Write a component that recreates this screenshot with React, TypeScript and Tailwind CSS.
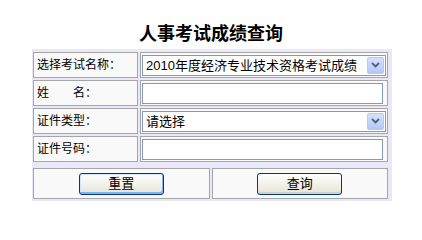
import React from 'react'

const cell = 'border border-[#a6a6a6] bg-[#f9f9f9]'

function ArrowButton() {
  return (
    <div className="ml-auto mr-px flex h-[17px] w-[17px] items-center justify-center rounded-[2px] border border-[#b6c8f4] bg-gradient-to-b from-[#d6e2fc] to-[#b3c8f5]">
      <svg viewBox="0 0 9 6" className="h-[6px] w-[9px]">
        <path d="M1 1 L4.5 4.5 L8 1" fill="none" stroke="#4d6185" strokeWidth="1.8" />
      </svg>
    </div>
  )
}

function FakeSelect({ value }: { value: string }) {
  return (
    <div className="flex h-[21px] w-[244px] items-center border border-[#7f9db9] bg-white pl-[3px] text-[13px] leading-none text-black">
      <span className="whitespace-nowrap">{value}</span>
      <ArrowButton />
    </div>
  )
}

function Row({ label, children }: { label: string; children: React.ReactNode }) {
  return (
    <div className="flex gap-[2px]">
      <div className={`${cell} flex h-[26px] w-[105px] items-center pl-[3px] text-[12px] text-black`}>
        {label}
      </div>
      <div className={`${cell} flex h-[26px] flex-1 items-center pl-px`}>{children}</div>
    </div>
  )
}

export default function App() {
  return (
    <div className="min-h-screen bg-white font-['Liberation_Sans','Noto_Sans_CJK_SC',sans-serif]">
      <div className="pt-[25px] text-center text-[18px] font-bold leading-[18px] text-black">
        人事考试成绩查询
      </div>

      <div className="ml-[32px] mt-[6px] flex w-[360px] flex-col gap-[2px] bg-[#e8e8f8] pb-[2px] pl-px pr-[4px] pt-[3px]">
        <Row label="选择考试名称：">
          <FakeSelect value="2010年度经济专业技术资格考试成绩" />
        </Row>
        <Row label="姓　　名：">
          <input className="h-[21px] w-[241px] border border-[#7f9db9] bg-white outline-none" />
        </Row>
        <Row label="证件类型：">
          <FakeSelect value="请选择" />
        </Row>
        <Row label="证件号码：">
          <input className="h-[21px] w-[241px] border border-[#7f9db9] bg-white outline-none" />
        </Row>

        <div className="mt-[4px] flex gap-[2px]">
          <div className={`${cell} flex h-[31px] flex-1 items-center justify-center`}>
            <button className="h-[22px] w-[85px] rounded-[3px] border border-[#003c74] bg-gradient-to-b from-white to-[#e6e3d6] text-[13px] leading-none text-black shadow-[inset_-1px_-2px_0_#89adf1,inset_1px_1px_0_#cee7ff]">
              重置
            </button>
          </div>
          <div className={`${cell} flex h-[31px] flex-1 items-center justify-center`}>
            <button className="h-[22px] w-[85px] rounded-[3px] border border-[#003c74] bg-gradient-to-b from-white to-[#e6e3d6] text-[13px] leading-none text-black shadow-[inset_0_-2px_0_#d6d0c5]">
              查询
            </button>
          </div>
        </div>
      </div>
    </div>
  )
}
